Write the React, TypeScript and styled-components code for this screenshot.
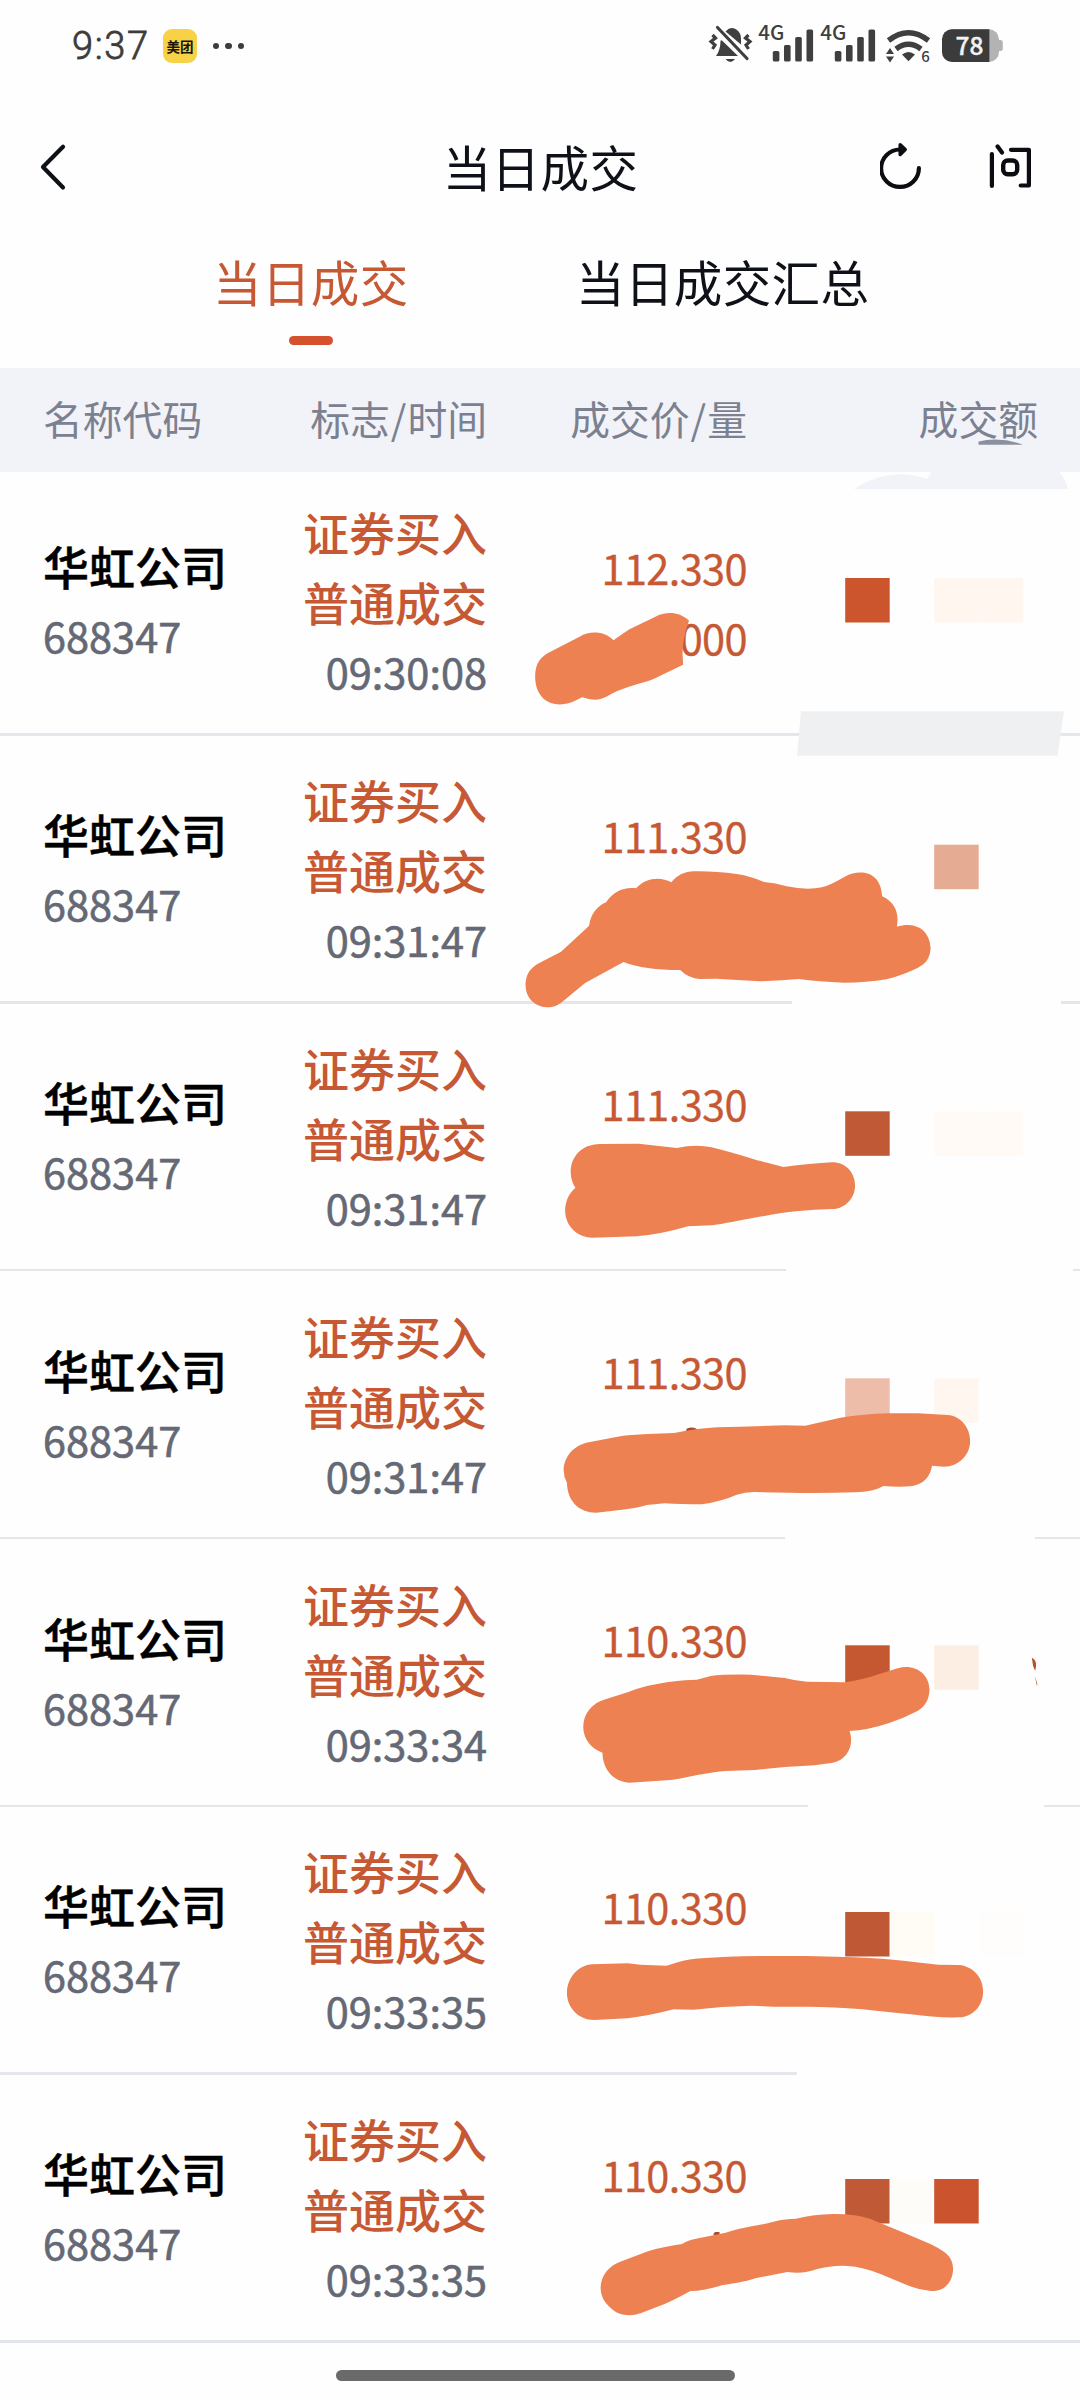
import React from "react";
import styled, { createGlobalStyle } from "styled-components";

const SANS = '"Noto Sans CJK SC", "Noto Sans", sans-serif';
const RED = "#c65933";

const GlobalStyle = createGlobalStyle`
  *, *::before, *::after { box-sizing: border-box; }
  body { margin: 0; background: #fefefe; }
`;

const Screen = styled.div`
  position: relative;
  display: flex;
  flex-direction: column;
  width: 1080px;
  height: 2400px;
  overflow: hidden;
  background: #fefefe;
  color: #0e1118;
  font-family: ${SANS};
`;

const StatusBar = styled.div`
  display: flex;
  justify-content: space-between;
  align-items: center;
  height: 92px;
  padding: 0 77px 0 72px;
`;

const StatusLeft = styled.div`
  display: flex;
  align-items: center;
`;

const Clock = styled.span`
  width: 91px;
  font: 300 38px/40px Roboto, sans-serif;
  letter-spacing: 1.6px;
  color: #3c3c3c;
  -webkit-text-stroke: 0.8px #3c3c3c;
`;

const AppBadge = styled.span`
  display: flex;
  align-items: center;
  justify-content: center;
  width: 34px;
  height: 34px;
  border-radius: 9px;
  background: #f7d247;
  color: #1a1508;
  font: 700 13.5px/34px ${SANS};
`;

const Dots = styled.div`
  display: flex;
  gap: 6px;
  margin-left: 16px;
`;

const Dot = styled.i`
  width: 6.3px;
  height: 6.3px;
  border-radius: 50%;
  background: #3c3c3c;
`;

const StatusIcons = styled.svg`
  display: block;
  width: 300px;
  height: 76px;
`;

const TitleBar = styled.header`
  display: grid;
  grid-template-columns: 200px 1fr 200px;
  align-items: center;
  height: 152px;
`;

const Title = styled.h1`
  margin: 0;
  padding: 0 0 5px 1px;
  text-align: center;
  font-size: 48.5px;
  font-weight: 400;
  line-height: 70px;
  letter-spacing: 0.4px;
`;

const BackIcon = styled.svg`
  width: 34px;
  height: 52px;
  margin-left: 36px;
`;

const Actions = styled.svg`
  width: 200px;
  height: 60px;
`;

const Tabs = styled.nav`
  display: flex;
  height: 124px;
  padding: 2px 0 0 213px;
  gap: 167.4px;
`;

const Tab = styled.div<{ $active?: boolean }>`
  display: flex;
  flex-direction: column;
  align-items: center;
  font-size: 48.5px;
  line-height: 70px;
  letter-spacing: 0.4px;
  color: ${(p) => (p.$active ? RED : "#0e1118")};
`;

const Indicator = styled.i`
  width: 44px;
  height: 9px;
  margin-top: 20px;
  border-radius: 5px;
  background: #d5512e;
`;

const COLUMNS = "200px 244px 260px 291px";

const TableHead = styled.div`
  position: relative;
  z-index: 1;
  display: grid;
  grid-template-columns: ${COLUMNS};
  align-items: center;
  flex: none;
  height: 104px;
  padding: 0 0 5px 43px;
  background: #f2f3f8;
  color: #7b8190;
  font-size: 39.8px;
  line-height: 60px;
`;

const HeadCell = styled.span<{ $left?: boolean }>`
  text-align: ${(p) => (p.$left ? "left" : "right")};
`;

const Slash = styled.span`
  margin: 0 1px;
`;

const List = styled.div`
  flex: none;
  margin-top: -4.1px;
`;

const Row = styled.div`
  display: flex;
  flex-direction: column;
  height: 267.83px;
`;

const RowBody = styled.div`
  display: grid;
  grid-template-columns: ${COLUMNS};
  align-items: center;
  flex: 1;
  padding: 1px 0 0 43px;
`;

const Divider = styled.div<{ $color: string; $size: number; $from: number; $to: number }>`
  height: ${(p) => p.$size}px;
  background: linear-gradient(
    90deg,
    ${(p) => `${p.$color} ${p.$from}px, transparent ${p.$from}px, transparent ${p.$to}px, ${p.$color} ${p.$to}px`}
  );
`;

const Stack = styled.div<{ $left?: boolean }>`
  display: flex;
  flex-direction: column;
  align-items: ${(p) => (p.$left ? "flex-start" : "flex-end")};
`;

const Name = styled.strong`
  color: #000;
  font-size: 46px;
  font-weight: 500;
  line-height: 69px;
  white-space: nowrap;
  -webkit-text-stroke: 0.5px #000;
`;

const Kind = styled.strong`
  color: ${RED};
  font-size: 46px;
  font-weight: 500;
  line-height: 70px;
  white-space: nowrap;
`;

const Meta = styled.span`
  color: #646975;
  font-size: 41.5px;
  line-height: 70px;
  -webkit-text-stroke: 0.6px #646975;
`;

const Price = styled.span`
  min-height: 70px;
  color: ${RED};
  font-size: 41.5px;
  line-height: 70px;
  letter-spacing: -0.6px;
  -webkit-text-stroke: 0.3px ${RED};
`;

const Prices = styled(Stack)`
  padding-top: 2px;
`;

const HomeBar = styled.div`
  width: 399px;
  height: 11px;
  margin: 27px auto 0 336px;
  border-radius: 6px;
  background: #6a6a6a;
`;

const Marks = styled.svg`
  position: absolute;
  inset: 0;
  z-index: 2;
  width: 1080px;
  height: 2400px;
  pointer-events: none;
`;

type Trade = {
  time: string;
  price: string;
  volume?: string;
  line: [string, number, number, number];
};

const trades: Trade[] = [
  { time: "09:30:08", price: "112.330", volume: "000", line: ["#e3e7ec", 3, 1080, 1080] },
  { time: "09:31:47", price: "111.330", line: ["#e4e6eb", 3, 792, 1061] },
  { time: "09:31:47", price: "111.330", line: ["#e6e6e6", 2, 786, 1073] },
  { time: "09:31:47", price: "111.330", line: ["#e5e7e6", 2, 785, 1035] },
  { time: "09:33:34", price: "110.330", line: ["#e6e6e6", 2, 808, 1044] },
  { time: "09:33:35", price: "110.330", line: ["#e4e6eb", 3, 797, 1080] },
  { time: "09:33:35", price: "110.330", line: ["#e2e6ea", 3, 1080, 1080] },
];

/* Mosaic blocks: top edge, then [column, colour] pairs */
const mosaics: { y: number; cells: [number, string][] }[] = [
  { y: 578, cells: [[0, "#cc552e"], [2, "#fff6f0"], [3, "#fff6f0"]] },
  { y: 844.7, cells: [[2, "#e5ab93"]] },
  { y: 1111.3, cells: [[0, "#c05935"], [2, "#fffaf6"], [3, "#fffaf6"]] },
  { y: 1378.3, cells: [[0, "#eebdaa"], [2, "#fff6f0"]] },
  { y: 1645.3, cells: [[0, "#c55731"], [2, "#fceee2"]] },
  { y: 1912, cells: [[0, "#be5835"], [1, "#fffbf5"], [3, "#fffdfb"]] },
  { y: 2179, cells: [[0, "#c05936"], [1, "#fdfcf8"], [2, "#cb542e"]] },
];

/* Brush strokes covering the volume of each trade */
const strokes: { y: number; d: string }[] = [
  { y: 490, d: "M95 560C95 520 110 500 135 486L215 440C245 420 285 425 307 451Q325 436 350 418L420 380C450 363 485 365 511 392Q488 455 495 524L415 567Q400 574 370 583Q330 597 307 608Q285 622 272 627Q250 633 222 622L200 634C180 645 150 647 130 635C105 620 95 590 95 560Z" },
  { y: 760, d: "M69 672C70 640 85 622 105 610L165 575L241 497C244 465 262 438 287 427C305 395 335 380 368 385C395 352 435 350 463 367C480 345 500 333 528 334Q580 333 640 342Q680 349 714 366Q745 368 775 379Q830 392 870 382Q890 377 932 350C975 325 1030 335 1033 409C1065 425 1080 455 1073 500C1120 485 1160 505 1164 562C1164 595 1150 612 1130 623Q1090 645 1045 658Q990 668 930 668Q860 665 808 657Q760 662 702 664Q640 660 585 656L540 657Q510 655 487 630Q390 630 334 606L230 669L172 722C150 745 115 750 90 727C75 712 69 695 69 672Z" },
  { y: 1020, d: "M191 455C192 410 220 373 270 372L375 371L478 384Q530 371 572 382Q630 398 695 421Q740 432 766 441Q840 430 898 427C935 427 960 458 960 498C959 535 932 568 898 567Q850 568 800 574Q760 578 680 595Q600 612 575 616L508 619Q440 642 370 649L250 653C205 652 176 615 176 570C177 540 188 518 204 503Q192 485 191 455Z" },
  { y: 1280, d: "M172 570C173 530 200 495 240 487L325 469Q350 464 400 462L470 459Q500 452 540 446Q580 440 650 440L770 436L825 437L920 413Q980 402 1050 400L1130 400L1210 405C1245 408 1271 442 1271 483C1271 525 1240 560 1200 560L1168 557C1163 590 1145 612 1115 618Q1080 622 1037 618Q1010 635 960 637Q860 640 780 638L690 636Q665 635 640 644Q600 664 545 673Q490 673 445 670L397 675Q370 684 330 689L260 698C215 698 182 665 181 608Q172 590 172 570Z" },
  { y: 1540, d: "M225 560C226 520 248 490 285 478L345 457Q370 445 400 437Q460 424 500 421L532 419L570 408Q600 403 680 404L770 414Q800 423 830 425L930 427Q950 426 1000 411L1075 385C1120 370 1161 400 1161 450C1160 480 1148 500 1130 512Q1090 535 1050 550Q990 572 945 573C958 615 940 660 900 668L850 676L770 681L690 690L610 693Q580 695 530 706Q480 718 460 720L350 728C310 727 277 690 277 638C245 625 225 595 225 560Z" },
  { y: 1820, d: "M181 517C182 475 210 435 250 433L345 430L380 434L450 437L485 425Q510 418 545 415Q610 409 700 408L830 408L960 412Q1040 416 1090 422L1185 434L1240 435C1280 438 1307 475 1306 515C1306 560 1275 592 1240 592Q1180 594 1110 583Q1040 575 980 568Q900 561 830 560L740 560L680 557Q600 559 522 569L470 568Q400 588 345 595L255 600C210 600 180 560 181 517Z" },
  { y: 2100, d: "M272 562C273 525 295 498 325 485L400 454Q440 440 492 432Q505 422 530 416L610 398Q650 385 680 379Q710 374 750 362Q770 357 800 356Q850 343 900 342Q960 341 1000 356L1100 402L1165 433Q1185 444 1200 455C1220 470 1225 490 1225 510C1222 550 1200 575 1165 573Q1130 570 1095 553L1030 523Q980 500 940 498Q900 495 855 508Q820 523 777 516L690 535Q670 544 600 556Q545 574 515 573Q470 600 445 612L380 640C350 652 318 645 300 625C282 608 272 588 272 562Z" },
];

const bars: [number, number][] = [[0, 51], [11.2, 45], [22.4, 37], [33.7, 29.5]];

function Signal({ x }: { x: number }) {
  return (
    <g>
      <text x={x - 14.5} y="40.3" fontSize="20.5" fontWeight="500" fontFamily={SANS}>4G</text>
      {bars.map(([dx, top]) => (
        <rect key={dx} x={x + dx} y={top} width="6.6" height={61.5 - top} rx="1.6" />
      ))}
    </g>
  );
}

function StatusGlyphs() {
  return (
    <StatusIcons viewBox="703 8 300 76" fill="#3f3f3f">
      <g>
        <path d="M716 56Q720.5 50 720.5 41Q721 39.500 722.500 41L738 56Z" />
        <path d="M725.500 31.500Q731 25.500 737 30Q741 33 741 39V44.500Z" />
        <path d="M725.500 59H735Q730.500 65 725.500 59Z" />
        <path d="M717.500 27.500L747 58.500" stroke="#3f3f3f" strokeWidth="3.2" strokeLinecap="round" />
        <path d="M712.500 35L715.500 38L711 41.500L715 45L712.500 49M748.500 35L745.500 38L750 41.500L746 45L748.500 49" fill="none" stroke="#3f3f3f" strokeWidth="3.200" />
      </g>
      <Signal x={772.8} />
      <Signal x={834.8} />
      <g fill="none" stroke="#3f3f3f" strokeWidth="5.400">
        <path d="M888.500 40.500Q908.500 25 928.500 40.500" />
        <path d="M896 49Q908.500 39.500 921 49" />
      </g>
      <path d="M902 54.500Q908.500 49.500 915 54.500L908.500 61.200Z" />
      <path d="M886 54L890 48L894 54ZM886 56.500L890 62.500L894 56.500Z" />
      <text x="921.3" y="61.8" fontSize="15" fontWeight="500" fontFamily={SANS}>6</text>
      <rect x="942" y="29.300" width="57" height="32.700" rx="10" fill="#b3b3b3" />
      <rect x="996" y="40" width="6.800" height="11" rx="2.500" fill="#b3b3b3" />
      <path d="M989.400 29.300H952A10 10 0 0 0 942 39.300V52A10 10 0 0 0 952 62H989.400Z" fill="#3b3b3b" />
      <text x="955.6" y="55" fontSize="24.5" fontWeight="500" fontFamily={SANS} fill="#f2f2f2" stroke="#f2f2f2" strokeWidth="0.4">78</text>
    </StatusIcons>
  );
}

function RedactionMarks() {
  return (
    <Marks viewBox="0 0 1080 2400">
      <path d="M854 489Q875 475 899 474.300Q915 474.500 927 479L931.600 472H1059.300Q1066 480 1068 489Z" fill="#f2f3f8" />
      <path d="M978.500 441.500Q1000 436.500 1023 444.700H978.500Z" fill="#8a909d" />
      <path d="M801 711.300H1064L1057.500 755.700H797Z" fill="#eff0f2" />
      {mosaics.map((m) =>
        m.cells.map(([col, fill]) => (
          <rect key={`${m.y}-${col}`} x={845.2 + col * 44.5} y={m.y} width="44.5" height="44.5" fill={fill} />
        ))
      )}
      <ellipse cx="691.600" cy="1430" rx="5.500" ry="2.600" fill="#a84a2c" />
      <path d="M713 2234.500L715 2232H719.500V2236Z" fill="#a84a2c" />
      <path d="M1031.800 1657.500Q1038 1661 1035.300 1670.500Q1034 1669 1033 1665.500ZM1034.800 1676L1037.400 1684L1037 1686Z" fill="#b8502e" />
      {strokes.map((s) => (
        <path key={s.y} d={s.d} transform={`translate(500 ${s.y}) scale(0.3699 0.33333)`} fill="#ee8152" />
      ))}
    </Marks>
  );
}

export default function App() {
  return (
    <Screen>
      <GlobalStyle />
      <StatusBar>
        <StatusLeft>
          <Clock>9:37</Clock>
          <AppBadge>美团</AppBadge>
          <Dots>
            <Dot />
            <Dot />
            <Dot />
          </Dots>
        </StatusLeft>
        <StatusGlyphs />
      </StatusBar>
      <TitleBar>
        <BackIcon viewBox="36 142 34 52" fill="none" stroke="#0e1118" strokeWidth="4.2" strokeLinecap="round" strokeLinejoin="round">
          <path d="M63 146.700L43 167L63 187.500" />
        </BackIcon>
        <Title>当日成交</Title>
        <Actions viewBox="880 138.5 200 60" fill="none" stroke="#0b0d12" strokeWidth="4.2" strokeLinecap="round" strokeLinejoin="round">
          <path d="M900 150A18.900 18.700 0 1 0 918.900 168.700" />
          <path d="M900.200 145.200L905.200 150L900.200 155Z" fill="#0b0d12" strokeWidth="3.500" />
          <path d="M991.900 154.500V186.500M997.600 147L1002 153M1011 150.300H1028.900V186H1020.700" />
          <rect x="1003.2" y="161" width="14" height="13.8" rx="4.5" strokeWidth="4.4" />
        </Actions>
      </TitleBar>
      <Tabs>
        <Tab $active>
          当日成交
          <Indicator />
        </Tab>
        <Tab>当日成交汇总</Tab>
      </Tabs>
      <TableHead>
        <HeadCell $left>名称代码</HeadCell>
        <HeadCell>标志<Slash>/</Slash>时间</HeadCell>
        <HeadCell>成交价<Slash>/</Slash>量</HeadCell>
        <HeadCell>成交额</HeadCell>
      </TableHead>
      <List>
        {trades.map((t, i) => (
          <Row key={i}>
            <RowBody>
              <Stack $left>
                <Name>华虹公司</Name>
                <Meta>688347</Meta>
              </Stack>
              <Stack>
                <Kind>证券买入</Kind>
                <Kind>普通成交</Kind>
                <Meta>{t.time}</Meta>
              </Stack>
              <Prices>
                <Price>{t.price}</Price>
                <Price>{t.volume}</Price>
              </Prices>
            </RowBody>
            <Divider $color={t.line[0]} $size={t.line[1]} $from={t.line[2]} $to={t.line[3]} />
          </Row>
        ))}
      </List>
      <HomeBar />
      <RedactionMarks />
    </Screen>
  );
}
